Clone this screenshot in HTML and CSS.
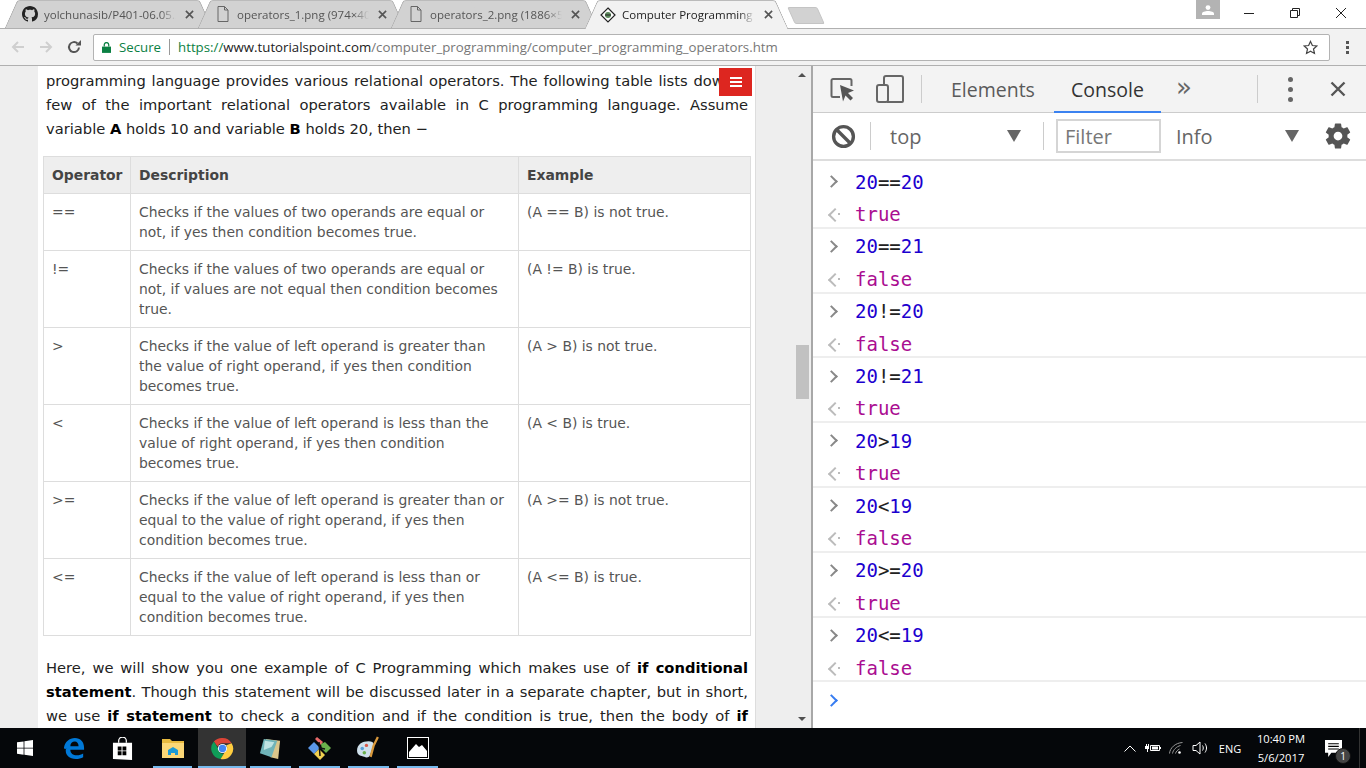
FILE: index.html
```html
<!DOCTYPE html>
<html>
<head>
    <title>Computer Programming - Operators</title>
    <meta charset="UTF-8"/>
    <link rel="stylesheet" href="styles.css">
</head>
<body>
<div class="tabstrip">
    <div class="tab first">
        <svg class="favicon" viewBox="0 0 16 16"><path fill="#222" d="M8 0C3.58 0 0 3.58 0 8c0 3.54 2.29 6.53 5.47 7.59.4.07.55-.17.55-.38 0-.19-.01-.82-.01-1.49-2.01.37-2.53-.49-2.69-.94-.09-.23-.48-.94-.82-1.13-.28-.15-.68-.52-.01-.53.63-.01 1.08.58 1.23.82.72 1.21 1.87.87 2.33.66.07-.52.28-.87.51-1.07-1.78-.2-3.64-.89-3.64-3.95 0-.87.31-1.59.82-2.15-.08-.2-.36-1.02.08-2.12 0 0 .67-.21 2.2.82.64-.18 1.32-.27 2-.27.68 0 1.36.09 2 .27 1.53-1.04 2.2-.82 2.2-.82.44 1.1.16 1.92.08 2.12.51.56.82 1.27.82 2.15 0 3.07-1.87 3.75-3.65 3.95.29.25.54.73.54 1.48 0 1.07-.01 1.93-.01 2.2 0 .21.15.46.55.38A8.013 8.013 0 0016 8c0-4.42-3.58-8-8-8z"/></svg>
        <span class="tab-title">yolchunasib/P401-06.05.2</span>
        <svg class="tab-close" viewBox="0 0 10 10"><path d="M1 1l8 8M9 1l-8 8"/></svg>
    </div>
    <div class="tab">
        <svg class="favicon" viewBox="0 0 16 16"><path fill="none" stroke="#666" d="M3 .5h6.500l3.500 3.500v11.500h-10zM9.500.5v3.500h3.500"/></svg>
        <span class="tab-title">operators_1.png (974×40</span>
        <svg class="tab-close" viewBox="0 0 10 10"><path d="M1 1l8 8M9 1l-8 8"/></svg>
    </div>
    <div class="tab">
        <svg class="favicon" viewBox="0 0 16 16"><path fill="none" stroke="#666" d="M3 .5h6.500l3.500 3.500v11.500h-10zM9.500.5v3.500h3.500"/></svg>
        <span class="tab-title">operators_2.png (1886×5</span>
        <svg class="tab-close" viewBox="0 0 10 10"><path d="M1 1l8 8M9 1l-8 8"/></svg>
    </div>
    <div class="tab active">
        <svg class="favicon" viewBox="0 0 16 16"><path fill="#fff" stroke="#222" stroke-width="1.200" d="M8 1l7 7-7 7-7-7z"/><circle cx="8" cy="8" r="3" fill="#5c8a5c"/><path fill="none" stroke="#222" d="M5 8h6"/></svg>
        <span class="tab-title">Computer Programming</span>
        <svg class="tab-close" viewBox="0 0 10 10"><path d="M1 1l8 8M9 1l-8 8"/></svg>
    </div>
    <div class="newtab"></div>
    <div class="spacer"></div>
    <div class="profile">
        <svg viewBox="0 0 12 10" width="12" height="10"><circle cx="6" cy="2.600" r="2.400" fill="#fff"/><path fill="#fff" d="M0 10V8.400C0 7 3 6 6 6s6 1 6 2.400V10z"/></svg>
    </div>
    <div class="winbtns">
        <svg viewBox="0 0 12 12"><path d="M1 6.500h10"/></svg>
        <svg viewBox="0 0 12 12"><path d="M1.500 3.500h7v7h-7zM3.500 3.500v-2h7v7h-2"/></svg>
        <svg viewBox="0 0 12 12"><path d="M1 1l10 10M11 1L1 11"/></svg>
    </div>
</div>

<div class="toolbar">
    <svg class="nav-icon" viewBox="0 0 16 16"><path class="dim" d="M14 8H3M8 3L3 8l5 5"/></svg>
    <svg class="nav-icon" viewBox="0 0 16 16"><path class="dim" d="M2 8h11M8 3l5 5-5 5"/></svg>
    <svg class="nav-icon reload" viewBox="0 0 16 16"><path fill="none" stroke="#555" stroke-width="2" d="M13 8.500A5 5 0 1 1 11.500 4.500"/><path fill="#555" d="M9.500 6.500H15V1z"/></svg>
    <div class="omnibox">
        <svg class="lock" viewBox="0 0 10 12"><path fill="#0b8043" d="M0 5h10v7H0z"/><path fill="none" stroke="#0b8043" stroke-width="1.400" d="M2.500 5V3a2.500 2.500 0 0 1 5 0v2"/></svg>
        <span class="secure">Secure</span>
        <span class="url"><span class="https">https://</span><span class="host">www.tutorialspoint.com</span>/computer_programming/computer_programming_operators.htm</span>
        <svg class="star" viewBox="0 0 16 16"><path fill="none" stroke="#444" stroke-width="1.300" d="M8 1.500l2 4.400 4.700.5-3.500 3.200 1 4.700L8 11.900l-4.200 2.400 1-4.700L1.300 6.400 6 5.900z"/></svg>
    </div>
    <div class="menu-dots"><i></i><i></i><i></i></div>
</div>

<div class="main">
    <div class="gutter"></div>
    <div class="page">
        <button class="hamburger" type="button"><i></i><i></i><i></i></button>
        <p>
            <span class="ln">programming language provides various relational operators. The following table lists down a</span>
            <span class="ln">few of the important relational operators available in C programming language. Assume</span>
            variable <b>A</b> holds 10 and variable <b>B</b> holds 20, then −
        </p>
        <table>
            <tr><th class="col-op">Operator</th><th class="col-desc">Description</th><th>Example</th></tr>
            <tr><td>==</td><td>Checks if the values of two operands are equal or not, if yes then condition becomes true.</td><td>(A == B) is not true.</td></tr>
            <tr><td>!=</td><td>Checks if the values of two operands are equal or not, if values are not equal then condition becomes true.</td><td>(A != B) is true.</td></tr>
            <tr><td>&gt;</td><td>Checks if the value of left operand is greater than the value of right operand, if yes then condition becomes true.</td><td>(A &gt; B) is not true.</td></tr>
            <tr><td>&lt;</td><td>Checks if the value of left operand is less than the value of right operand, if yes then condition becomes true.</td><td>(A &lt; B) is true.</td></tr>
            <tr><td>&gt;=</td><td>Checks if the value of left operand is greater than or equal to the value of right operand, if yes then condition becomes true.</td><td>(A &gt;= B) is not true.</td></tr>
            <tr><td>&lt;=</td><td>Checks if the value of left operand is less than or equal to the value of right operand, if yes then condition becomes true.</td><td>(A &lt;= B) is true.</td></tr>
        </table>
        <p>
            <span class="ln">Here, we will show you one example of C Programming which makes use of <b>if conditional</b></span>
            <span class="ln"><b>statement</b>. Though this statement will be discussed later in a separate chapter, but in short,</span>
            <span class="ln">we use <b>if statement</b> to check a condition and if the condition is true, then the body of <b>if</b></span>
        </p>
    </div>
    <div class="scrollbar">
        <span class="arrow-up"></span>
        <span class="thumb"></span>
        <span class="arrow-down"></span>
    </div>

    <div class="devtools">
        <div class="dt-tabs">
            <svg class="dt-inspect" viewBox="0 0 26 26"><path fill="none" stroke="#666" stroke-width="2" d="M10 21H3a1.500 1.500 0 0 1-1.500-1.500v-15A1.500 1.500 0 0 1 3 3h17a1.500 1.500 0 0 1 1.500 1.500V10"/><path fill="#555" d="M10 9l14 5.500-6 2.500 5 5-2.500 2.500-5-5-2.500 6z"/></svg>
            <svg class="dt-device" viewBox="0 0 28 28"><path fill="none" stroke="#666" stroke-width="2" d="M8 10V3a2 2 0 0 1 2-2h15a2 2 0 0 1 2 2v23a1 1 0 0 1-1 1H11"/><rect x="1" y="10" width="11" height="17" rx="2" fill="none" stroke="#666" stroke-width="2"/></svg>
            <span class="dt-sep"></span>
            <span class="dt-tab">Elements</span>
            <span class="dt-tab selected">Console</span>
            <span class="dt-more">»</span>
            <span class="dt-sep far"></span>
            <span class="kebab"><i></i><i></i><i></i></span>
            <svg class="dt-close" viewBox="0 0 16 16"><path d="M1.500 1.500l13 13M14.500 1.500l-13 13"/></svg>
        </div>
        <div class="dt-filter">
            <svg class="dt-ban" viewBox="0 0 24 24"><circle cx="12" cy="12" r="9.500" fill="none" stroke="#555" stroke-width="3.200"/><path stroke="#555" stroke-width="3.200" d="M5.500 5.500l13 13"/></svg>
            <span class="dt-sep small"></span>
            <span class="context">top</span>
            <span class="tri"></span>
            <span class="dt-sep small mid"></span>
            <span class="filter-box">Filter</span>
            <span class="level">Info</span>
            <span class="tri"></span>
            <svg class="dt-gear" viewBox="0 0 24 24"><path fill="#555" d="M19.430 12.980c.04-.32.070-.64.070-.98s-.03-.66-.07-.98l2.110-1.650c.19-.15.240-.42.120-.64l-2-3.460c-.12-.22-.39-.3-.61-.22l-2.490 1c-.52-.4-1.080-.73-1.690-.98l-.38-2.650C14.460 2.180 14.250 2 14 2h-4c-.25 0-.46.18-.49.42l-.38 2.650c-.61.25-1.170.59-1.690.98l-2.490-1c-.23-.09-.49 0-.61.22l-2 3.460c-.13.22-.07.49.12.64l2.110 1.650c-.04.32-.07.65-.07.98s.03.66.07.98l-2.110 1.650c-.19.15-.24.42-.12.64l2 3.460c.12.22.39.3.61.22l2.490-1c.52.4 1.080.73 1.690.98l.38 2.650c.03.24.24.42.49.42h4c.25 0 .46-.18.49-.42l.38-2.650c.61-.25 1.170-.59 1.690-.98l2.490 1c.23.09.49 0 .61-.22l2-3.460c.12-.22.07-.49-.12-.64l-2.110-1.650zM12 15.500c-1.930 0-3.500-1.570-3.500-3.500s1.570-3.500 3.500-3.500 3.500 1.570 3.500 3.500-1.570 3.500-3.500 3.500z"/></svg>
        </div>
        <div class="console">
            <div class="entry"><div class="line"><span class="chev"></span><code><b>20</b>==<b>20</b></code></div><div class="line"><span class="back"></span><code class="res">true</code></div></div>
            <div class="entry"><div class="line"><span class="chev"></span><code><b>20</b>==<b>21</b></code></div><div class="line"><span class="back"></span><code class="res">false</code></div></div>
            <div class="entry"><div class="line"><span class="chev"></span><code><b>20</b>!=<b>20</b></code></div><div class="line"><span class="back"></span><code class="res">false</code></div></div>
            <div class="entry"><div class="line"><span class="chev"></span><code><b>20</b>!=<b>21</b></code></div><div class="line"><span class="back"></span><code class="res">true</code></div></div>
            <div class="entry"><div class="line"><span class="chev"></span><code><b>20</b>&gt;<b>19</b></code></div><div class="line"><span class="back"></span><code class="res">true</code></div></div>
            <div class="entry"><div class="line"><span class="chev"></span><code><b>20</b>&lt;<b>19</b></code></div><div class="line"><span class="back"></span><code class="res">false</code></div></div>
            <div class="entry"><div class="line"><span class="chev"></span><code><b>20</b>&gt;=<b>20</b></code></div><div class="line"><span class="back"></span><code class="res">true</code></div></div>
            <div class="entry"><div class="line"><span class="chev"></span><code><b>20</b>&lt;=<b>19</b></code></div><div class="line"><span class="back"></span><code class="res">false</code></div></div>
            <div class="line"><span class="chev blue"></span></div>
        </div>
    </div>
</div>

<div class="taskbar">
    <div class="task">
        <svg viewBox="0 0 16 16" width="16" height="16"><path fill="#fff" d="M0 2.300l6.600-.9v6.300H0zM7.400 1.300L16 0v7.700H7.400zM0 8.400h6.600v6.300L0 13.800zM7.400 8.400H16V16l-8.600-1.200z"/></svg>
    </div>
    <div class="task">
        <svg viewBox="0 0 24 24" width="22" height="22"><path fill="#0078d7" d="M1 12C2 5 7 1 13 1c6 0 10 4 10 11v2H8c0 4 3 6 7 6 3 0 5-1 7-2v4c-2 1-5 2-8 2-7 0-11-4-11-9 0-1 0-2 1-3-1 1-2 2-3 0zm7-2h9c0-3-2-5-4-5-3 0-5 2-5 5z"/></svg>
    </div>
    <div class="task">
        <svg viewBox="0 0 22 24" width="21" height="23"><path fill="none" stroke="#fff" stroke-width="1.300" d="M7 6V4a4 4 0 0 1 8 0v2"/><path fill="#fff" d="M1 6h20v18l-20-1z"/><path fill="#000" d="M6 10h4v4H6zM11 10h4v4h-4zM6 15h4v4H6zM11 15h4v4h-4z"/></svg>
    </div>
    <div class="task run-split">
        <svg viewBox="0 0 22 20" width="22" height="20"><path fill="#e7b93f" d="M0 1h8l2 2h12v3H0z"/><path fill="#fbd777" d="M0 5h22v15H0z"/><path fill="#1d9ad6" d="M6 17v-5l5-3 5 3v5h-3v-2H9v2z"/></svg>
    </div>
    <div class="task current run">
        <svg viewBox="0 0 24 24" width="23" height="23"><path fill="#db4437" d="M12 1a11 11 0 0 1 9.500 5.500H12A5.500 5.500 0 0 0 6.800 10L3 4.800A11 11 0 0 1 12 1z"/><path fill="#0f9d58" d="M3 4.800L7.500 12a5 5 0 0 0 5.800 5.400L10 23A11 11 0 0 1 3 4.800z"/><path fill="#ffcd40" d="M21.500 6.500A11 11 0 0 1 10 23l4.600-7.500a5 5 0 0 0 1.400-7z"/><circle cx="12" cy="12" r="4.800" fill="#fff"/><circle cx="12" cy="12" r="3.800" fill="#4285f4"/></svg>
    </div>
    <div class="task run">
        <svg viewBox="0 0 24 24" width="23" height="23"><path fill="#d9c58a" d="M7 2l15 2-2 19-8-2z"/><path fill="#6fb3b8" d="M5 2l14 2-6 17-12-4z"/><path fill="#bfe3e3" d="M6 4l10 1.500-3 5-8 3z"/></svg>
    </div>
    <div class="task run">
        <svg viewBox="0 0 24 24" width="24" height="24"><path fill="#5a96e8" d="M0 12l6-6 6 6-6 6z"/><path fill="#e86a6a" d="M7 3l2-2 6 5-2 3z"/><path fill="#6ab04c" d="M13 8l4-2 6 6-5 5-4-4z"/><path fill="#f0cf50" d="M6 18l5-5 6 6-5 5z"/><path stroke="#111" stroke-width="1.500" d="M11 6l1 14M12 12l5 1"/></svg>
    </div>
    <div class="task run">
        <svg viewBox="0 0 24 24" width="25" height="25"><path fill="#cfe0ec" d="M1 14C1 8 6 5 12 5c3 0 5 1 5 3l-3 9c-1 4-4 4-6 3-3-1-7-1-7-6z"/><circle cx="6" cy="12" r="1.700" fill="#5aa0d8"/><circle cx="10" cy="9" r="1.600" fill="#d8584a"/><circle cx="8" cy="16" r="1.700" fill="#6ab04c"/><path stroke="#d9983b" stroke-width="2.200" d="M14 20l3-11 4-8"/></svg>
    </div>
    <div class="task run">
        <svg viewBox="0 0 22 22" width="22" height="22"><rect width="22" height="22" fill="#000" stroke="#fff" stroke-width="2"/><path fill="#fff" d="M2 20v-5l7-8 3 3 3-2 5 6v6z"/></svg>
    </div>
    <div class="spacer"></div>
    <div class="tray">
        <svg viewBox="0 0 12 7" width="12" height="7"><path fill="none" stroke="#fff" d="M.5 6.500L6 1l5.500 5.500"/></svg>
        <svg viewBox="0 0 16 10" width="16" height="10"><path fill="none" stroke="#fff" d="M5.500 2.500h9v5h-9z"/><path fill="#fff" d="M7 3.500h6v3H7zM15 4h1v2h-1zM0 3h4v3H3v3H2V6H0zM1 1h1v2H1zM3 1h1v2H3z"/></svg>
        <svg viewBox="0 0 14 12" width="14" height="12"><path fill="none" stroke="#999" d="M.5 11.500C1 6 6 1 13.500.5M3.500 11.500c.5-3.500 4-7 8-8M6.500 11.500c.5-2 2-3.500 4-4.500"/><circle cx="10.500" cy="10.500" r="1.300" fill="#fff"/></svg>
        <svg viewBox="0 0 16 14" width="16" height="14"><path fill="none" stroke="#fff" d="M1 4.500h3L8 1v12L4 9.500H1zM10.500 4.500c1 1.500 1 3.500 0 5M13 2.500c2 3 2 6 0 9"/></svg>
        <span class="lang">ENG</span>
        <div class="clock"><span>10:40 PM</span><span>5/6/2017</span></div>
        <div class="notify">
            <svg viewBox="0 0 16 16" width="17" height="17"><path fill="#fff" d="M0 0h16v12H6l-3 4v-4H0z"/><path stroke="#000" d="M3 3.500h10M3 6h10M3 8.500h10"/></svg>
            <span class="badge">1</span>
        </div>
        <span class="show-desktop"></span>
    </div>
</div>
</body>
</html>
```

FILE: styles.css
```css
* {
    box-sizing: border-box;
}
html, body {
    margin: 0;
    height: 100%;
    overflow: hidden;
}
body {
    display: flex;
    flex-direction: column;
    font-family: "Open Sans", "Liberation Sans", sans-serif;
    background: #fff;
}
.spacer {
    flex: 1;
}

/* tab strip */
.tabstrip {
    height: 28px;
    display: flex;
    padding-left: 5px;
    background: #fff;
    position: relative;
}
.tab {
    position: relative;
    width: 207px;
    height: 28px;
    margin-right: -14px;
    padding: 0 18px 0 17px;
    display: flex;
    align-items: center;
    gap: 6px;
    font-size: 11.500px;
    color: #555;
    z-index: 1;
}
.tab::before, .tab::after {
    content: "";
    position: absolute;
    top: 0;
    bottom: 0;
    width: 55%;
    background: #d2d2d2;
    border-top: 1px solid #bbb;
    z-index: -1;
}
.tab::before {
    left: 6px;
    transform: skewX(-24deg);
    border-left: 1px solid #a8a8a8;
    border-radius: 3px 0 0 0;
}
.tab::after {
    right: 6px;
    transform: skewX(24deg);
    border-right: 1px solid #a8a8a8;
    border-radius: 0 3px 0 0;
}
.tab.first {
    padding-left: 17px;
}
.tab.active {
    color: #222;
    z-index: 3;
    width: 203px;
    margin-left: 1px;
    height: 29px;
    padding-left: 15px;
    padding-right: 15px;
}
.tab.active::before, .tab.active::after {
    background: #f2f2f2;
}
.favicon {
    width: 16px;
    height: 16px;
    flex: none;
}
.tab-title {
    flex: 1;
    min-width: 0;
    white-space: nowrap;
    overflow: hidden;
    -webkit-mask-image: linear-gradient(to right, #000 88%, transparent);
    mask-image: linear-gradient(to right, #000 88%, transparent);
}
.tab-close {
    width: 9px;
    height: 9px;
    flex: none;
    margin-left: 3px;
}
.tab-close path {
    stroke: #555;
    stroke-width: 1.800;
    fill: none;
}
.newtab {
    width: 30px;
    height: 17px;
    margin: 7px 0 0 17px;
    background: #d2d2d2;
    border: 1px solid #c4c4c4;
    transform: skewX(24deg);
    border-radius: 2px;
}
.profile {
    width: 24px;
    height: 19px;
    background: #b3b3b3;
    display: flex;
    align-items: center;
    justify-content: center;
    margin-right: 23px;
}
.winbtns {
    display: flex;
    gap: 34px;
    padding: 7px 19px 0 0;
}
.winbtns svg {
    width: 12px;
    height: 12px;
}
.winbtns path {
    fill: none;
    stroke: #222;
}

/* toolbar */
.toolbar {
    height: 38px;
    background: #f2f2f2;
    border-top: 1px solid #b0b0b0;
    border-bottom: 1px solid #b0b0b0;
    display: flex;
    align-items: center;
    padding-left: 10px;
    position: relative;
    z-index: 2;
}
.nav-icon {
    width: 16px;
    height: 16px;
    margin-right: 12px;
}
.nav-icon .dim {
    fill: none;
    stroke: #cfcfcf;
    stroke-width: 2;
}
.reload {
    margin-right: 11px;
}
.omnibox {
    width: 1237px;
    height: 27px;
    background: #fff;
    border: 1px solid #b3b3b3;
    border-radius: 2px;
    display: flex;
    align-items: center;
    padding: 0 11px 0 8px;
    font-size: 13.250px;
}
.lock {
    width: 9px;
    height: 11px;
    margin-right: 8px;
}
.secure {
    color: #0b8043;
    padding-right: 8px;
    margin-right: 8px;
    border-right: 1px solid #999;
    line-height: 16px;
}
.url {
    flex: 1;
    color: #777;
    white-space: nowrap;
}
.https {
    color: #0b8043;
}
.host {
    color: #222;
}
.star {
    width: 15px;
    height: 15px;
}
.menu-dots {
    margin-left: 16px;
    display: flex;
    flex-direction: column;
    gap: 2px;
}
.menu-dots i {
    width: 3px;
    height: 3px;
    background: #555;
    display: block;
}

/* page area */
.main {
    flex: 1;
    min-height: 0;
    display: flex;
    overflow: hidden;
}
.gutter {
    width: 38px;
    background: #eee;
    flex: none;
}
.page {
    width: 718px;
    flex: none;
    background: #fff;
    padding: 3px 7px 0 8px;
    position: relative;
    border-right: 1px solid #ddd;
    font-family: "DejaVu Sans", Verdana, sans-serif;
    font-size: 14.700px;
    overflow: hidden;
}
.page p {
    margin: 0;
    line-height: 24px;
    color: #222;
}
.ln {
    display: block;
    text-align: justify;
    text-align-last: justify;
}
.page b {
    color: #000;
}
.hamburger {
    position: absolute;
    top: 2px;
    right: 3px;
    width: 33px;
    height: 28px;
    background: #dd2620;
    border: 0;
    padding: 0;
    display: flex;
    flex-direction: column;
    align-items: center;
    justify-content: center;
    gap: 2px;
}
.hamburger i {
    display: block;
    width: 12px;
    height: 2px;
    background: #fff;
}
table {
    border-collapse: collapse;
    table-layout: fixed;
    width: 708px;
    margin: 15px 0 20px -3px;
    font-size: 13.900px;
    line-height: 20px;
    color: #555;
}
th, td {
    border: 1px solid #ddd;
    padding: 8px 12px 8px 8px;
    text-align: left;
    vertical-align: top;
}
th {
    background: #eee;
    color: #444;
    padding: 8px 0 8px 8px;
}
.col-op {
    width: 87px;
}
.col-desc {
    width: 388px;
}
.scrollbar {
    width: 57px;
    flex: none;
    background: #eee;
    position: relative;
    border-right: 2px solid #a8a8a8;
}
.arrow-up, .arrow-down {
    position: absolute;
    left: 42px;
    width: 0;
    height: 0;
    border-left: 4px solid transparent;
    border-right: 4px solid transparent;
}
.arrow-up {
    top: 7px;
    border-bottom: 4px solid #505050;
}
.arrow-down {
    bottom: 7px;
    border-top: 4px solid #505050;
}
.thumb {
    position: absolute;
    left: 40px;
    top: 279px;
    width: 13px;
    height: 54px;
    background: #c1c1c1;
}

/* devtools */
.devtools {
    flex: 1;
    display: flex;
    flex-direction: column;
    background: #fff;
    min-width: 0;
}
.dt-tabs {
    height: 47px;
    background: #f3f3f3;
    border-bottom: 1px solid #ccc;
    display: flex;
    align-items: center;
    flex: none;
    position: relative;
}
.dt-inspect {
    width: 26px;
    height: 26px;
    margin-left: 17px;
}
.dt-device {
    width: 28px;
    height: 28px;
    margin-left: 20px;
}
.dt-sep {
    width: 1px;
    height: 28px;
    background: #ccc;
    margin-left: 17px;
    flex: none;
}
.dt-sep.far {
    margin-left: 65px;
}
.dt-sep.small {
    margin-left: 14px;
}
.dt-sep.mid {
    margin-left: 22px;
}
.dt-tab {
    font-size: 19.500px;
    color: #5a5a5a;
    padding: 0 17px;
    width: 120px;
    height: 47px;
    line-height: 48px;
    margin-left: 12px;
}
.dt-tab.selected {
    color: #333;
    margin-left: 0;
    width: 107px;
    text-align: center;
    padding: 0;
    border-bottom: 2px solid #3b82f0;
}
.dt-more {
    font-size: 26px;
    color: #666;
    margin-left: 15px;
    line-height: 42px;
    height: 47px;
    font-family: "DejaVu Sans", sans-serif;
}
.kebab {
    display: flex;
    flex-direction: column;
    gap: 5px;
    margin-left: 30px;
}
.kebab i {
    width: 5px;
    height: 5px;
    border-radius: 50%;
    background: #666;
    display: block;
}
.dt-close {
    width: 16px;
    height: 16px;
    margin-left: 37px;
}
.dt-close path {
    stroke: #555;
    stroke-width: 2.400;
    fill: none;
}
.dt-filter {
    height: 48px;
    flex: none;
    display: flex;
    align-items: center;
    border-bottom: 2px solid #ddd;
    font-size: 20px;
    color: #666;
}
.dt-ban {
    width: 25px;
    height: 25px;
    margin-left: 18px;
}
.context {
    width: 117px;
    margin-left: 19px;
    padding-top: 1px;
}
.tri {
    width: 0;
    height: 0;
    border-left: 7px solid transparent;
    border-right: 7px solid transparent;
    border-top: 12px solid #666;
}
.filter-box {
    width: 105px;
    height: 34px;
    margin-left: 12px;
    border: 2px solid #d5d5d5;
    padding-left: 7px;
    line-height: 31px;
    color: #777;
}
.level {
    width: 109px;
    margin-left: 15px;
    padding-top: 1px;
}
.dt-gear {
    width: 30px;
    height: 30px;
    margin-left: 24px;
}
.console {
    flex: 1;
    padding-top: 3px;
    font-family: "DejaVu Sans Mono", "Liberation Mono", monospace;
    font-size: 19px;
}
.entry {
    height: 64.800px;
    border-bottom: 2px solid #eee;
}
.line {
    height: 32.400px;
    display: flex;
    align-items: center;
    padding: 3px 0 0 16px;
}
.line code {
    font-family: inherit;
    margin-left: 17px;
    color: #222;
}
.line code b {
    font-weight: normal;
    color: #1c00cf;
}
.line code.res {
    color: #aa0d91;
}
.chev {
    width: 9px;
    height: 9px;
    margin-left: -2px;
    border-top: 2.500px solid #888;
    border-right: 2.500px solid #888;
    transform: rotate(45deg);
    flex: none;
    margin-right: 2px;
}
.chev.blue {
    border-color: #367cf1;
}
.back {
    width: 9px;
    height: 10px;
    position: relative;
    flex: none;
}
.back::before {
    content: "";
    position: absolute;
    left: 1px;
    top: 1px;
    width: 8px;
    height: 8px;
    border-bottom: 2px solid #bbb;
    border-left: 2px solid #bbb;
    transform: rotate(45deg);
}
.back::after {
    content: "";
    position: absolute;
    left: 9px;
    top: 4px;
    width: 2px;
    height: 2px;
    background: #bbb;
}

/* taskbar */
.taskbar {
    height: 40px;
    flex: none;
    background: #05070a;
    display: flex;
    color: #fff;
    font-family: "Open Sans", "Liberation Sans", sans-serif;
}
.task {
    width: 49px;
    height: 40px;
    display: flex;
    align-items: center;
    justify-content: center;
    position: relative;
}
.task.run-split {
    margin-left: 1px;
}
.task.current {
    background: #333;
    margin-left: 1px;
    width: 48px;
}
.task.run::after, .task.run-split::after {
    content: "";
    position: absolute;
    bottom: 0;
    left: 4px;
    right: 4px;
    height: 2px;
    background: #76b9ed;
}
.task.current::after {
    left: 0;
    right: 0;
}
.task.run-split::after {
    left: 5px;
    right: 5px;
}
.tray {
    display: grid;
    grid-template-columns: 24px 22px 24px 24px 36px 66px 38px 14px;
    justify-items: center;
    align-items: center;
    font-size: 11px;
}
.clock {
    display: flex;
    flex-direction: column;
    align-items: center;
    line-height: 19px;
    font-size: 11.200px;
}
.notify {
    position: relative;
    width: 38px;
    display: flex;
    justify-content: center;
}
.badge {
    position: absolute;
    left: 21px;
    top: 8px;
    width: 16px;
    height: 16px;
    border-radius: 50%;
    background: #444;
    border: 1px solid #111;
    font-size: 10px;
    line-height: 14px;
    text-align: center;
}
.show-desktop {
    width: 1px;
    height: 40px;
    background: #333;
}
```
